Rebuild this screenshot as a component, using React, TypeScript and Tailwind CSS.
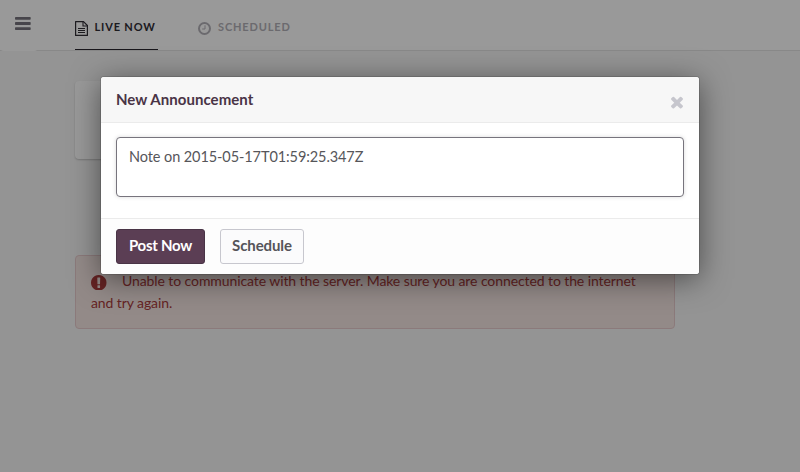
import React from "react";

function BarsIcon() {
  return (
    <svg width="16" height="14" viewBox="0 0 16 14" fill="currentColor">
      <rect x="0" y="0" width="15.7" height="2.8" rx="0.7" />
      <rect x="0" y="5.1" width="15.7" height="2.8" rx="0.7" />
      <rect x="0" y="10.2" width="15.7" height="2.8" rx="0.7" />
    </svg>
  );
}

function FileIcon() {
  return (
    <svg width="13" height="15" viewBox="0 0 13 15" fill="none" stroke="currentColor">
      <path d="M0.6 0.6H8.5L12.4 4.5V14.4H0.6Z" strokeWidth="1.2" strokeLinejoin="round" />
      <path d="M8 0.6V5H12.4" strokeWidth="1.1" />
      <path d="M3 7.5H10M3 9.5H10M3 11.5H10" strokeWidth="1" />
    </svg>
  );
}

function ClockIcon() {
  return (
    <svg width="13" height="13" viewBox="0 0 13 13" fill="none" stroke="currentColor">
      <circle cx="6.5" cy="6.5" r="5.5" strokeWidth="2" />
      <path d="M7 3.3V7H4.2" strokeWidth="1" />
    </svg>
  );
}

function TimesIcon() {
  return (
    <svg width="18" height="18" viewBox="0 0 1792 1792" fill="currentColor">
      <path d="M1490 1322q0 40-28 68l-136 136q-28 28-68 28t-68-28l-294-294-294 294q-28 28-68 28t-68-28l-136-136q-28-28-28-68t28-68l294-294-294-294q-28-28-28-68t28-68l136-136q28-28 68-28t68 28l294 294 294-294q28-28 68-28t68 28l136 136q28 28 28 68t-28 68l-294 294 294 294q28 28 28 68z" />
    </svg>
  );
}

function AlertIcon() {
  return (
    <svg width="15.5" height="15.5" viewBox="128 128 1536 1536" fill="currentColor">
      <path d="M896 128q209 0 385.5 103t279.5 279.5 103 385.5-103 385.5-279.5 279.5-385.5 103-385.5-103-279.5-279.5-103-385.5 103-385.5 279.5-279.5 385.5-103zm128 1247v-190q0-14-9-23.5t-22-9.5h-192q-13 0-23 10t-10 23v190q0 13 10 23t23 10h192q13 0 22-9.5t9-23.5zm-2-344l18-621q0-12-10-18-10-8-24-8h-220q-14 0-24 8-10 6-10 18l17 621q0 10 10 17.5t24 7.5h185q14 0 23.5-7.5t10.5-17.5z" />
    </svg>
  );
}

function Page() {
  return (
    <div className="h-[472px] bg-[#f7f7f7]">
      <header className="flex h-[51px] border-b border-[#e3e3e3] bg-white">
        <button className="flex h-[51px] w-[38px] shrink-0 items-start rounded-b bg-white pl-[15px] pt-[17px] text-[#77747d]">
          <BarsIcon />
        </button>
        <nav className="flex pl-[37px] text-[11px] font-bold leading-4 tracking-[0.85px]">
          <div className="flex h-[50px] w-[83px] border-b border-[#2b2730] pt-[19px] text-[#302d35]">
            <span className="mr-[6.5px] pt-0.5"><FileIcon /></span>
            <span className="whitespace-nowrap">LIVE NOW</span>
          </div>
          <div className="ml-10 flex h-[50px] pt-[19px] text-[#b3b1b8]">
            <span className="mr-[7px] pt-[3px]"><ClockIcon /></span>
            <span>SCHEDULED</span>
          </div>
        </nav>
      </header>
      <main className="ml-[75px] w-[600px] pt-[30px]">
        <div className="h-[78px] rounded bg-white shadow-[0_1px_2px_rgba(0,0,0,0.2)]" />
        <div className="mt-24 h-[74px] rounded border border-[#e8cccd] bg-[#f6e6e3] px-[15px] pt-[14px] text-sm leading-[22px] tracking-[-0.09px] text-[#a93b3b]">
          <span className="mr-[15.5px] inline-block align-[-4px]"><AlertIcon /></span>
          Unable to communicate with the server. Make sure you are connected to the internet and try again.
        </div>
      </main>
    </div>
  );
}

function AnnouncementDialog() {
  return (
    <div className="absolute inset-0 bg-black/40 pl-[101px] pt-[77px]">
      <section className="h-[197px] w-[598px] overflow-hidden rounded-[3px] bg-white shadow-[0_0_0_1px_rgba(0,0,0,0.12),0_5px_30px_rgba(0,0,0,0.5)]">
        <div className="flex h-[46px] justify-between border-b border-[#ebebeb] bg-[#f7f7f7] pl-[15px] pr-[13px]">
          <h2 className="pt-[11px] text-[15px] font-bold leading-[22px] tracking-[0.05px] text-[#493446]">New Announcement</h2>
          <button className="flex h-[34px] items-start pt-4 text-[#c6c6cd]"><TimesIcon /></button>
        </div>
        <div className="h-[95px] px-[15px] pt-[14px]">
          <textarea
            className="block h-[60px] w-full resize-none rounded border border-[#77747d] bg-white px-3 py-[9px] text-[14.5px] leading-[20px] tracking-[-0.09px] text-[#56565a] shadow-[0_0_4px_rgba(0,0,0,0.15)] outline-none"
            defaultValue="Note on 2015-05-17T01:59:25.347Z"
          />
        </div>
        <div className="flex h-14 gap-[15px] border-t border-[#ebebeb] bg-[#fdfdfd] px-[15px] pt-[10px] text-[15px] font-bold tracking-[-0.1px]">
          <button className="h-[35px] w-[89px] rounded-[3px] border border-[#493446] bg-[#5b3e54] pb-0.5 tracking-[-0.25px] text-white">Post Now</button>
          <button className="h-[35px] w-[84px] rounded-[3px] border border-[#c7c7ce] bg-[#fbfbfc] pb-0.5 text-[#555459]">Schedule</button>
        </div>
      </section>
    </div>
  );
}

export default function App() {
  return (
    <div className="relative h-[472px] w-[800px] overflow-hidden font-['Lato','Liberation_Sans',sans-serif]">
      <Page />
      <AnnouncementDialog />
    </div>
  );
}
